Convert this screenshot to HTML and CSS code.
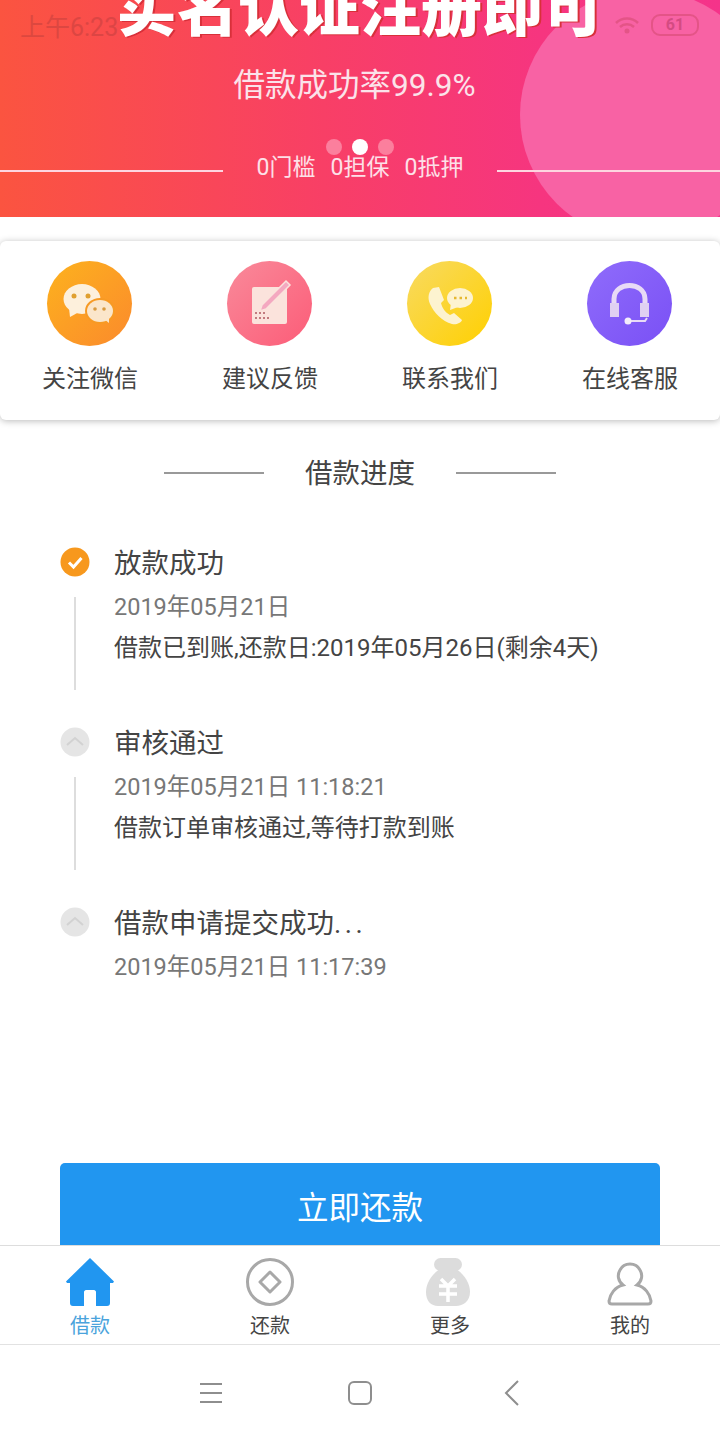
FILE: index.html
```html
<!DOCTYPE html>
<html lang="zh-CN">
<head>
    <meta charset="UTF-8">
    <title>借款进度</title>
    <link rel="stylesheet" href="styles.css">
</head>
<body>
<div class="page">
    <!-- status bar lies over the banner -->
    <div class="statusBar">
        <span class="statusTime">上午6:23</span>
        <svg class="statusWifi" width="26" height="20" viewBox="0 0 26 20">
            <path d="M2 8a16 16 0 0 1 22 0M6 12a10.500 10.500 0 0 1 14 0" fill="none" stroke="#c8405c" stroke-width="2.500"/>
            <circle cx="13" cy="16" r="2.500" fill="#c8405c"/>
        </svg>
        <span class="statusBattery">61</span>
    </div>

    <div class="banner">
        <div class="bannerCircle"></div>
        <div class="bannerTitle">实名认证注册即可</div>
        <div class="bannerRate">借款成功率99.9%</div>
        <div class="bannerDots"><i></i><i class="on"></i><i></i></div>
        <div class="bannerTags">
            <span class="tagLine"></span>
            <span class="tagText">0门槛</span>
            <span class="tagText">0担保</span>
            <span class="tagText">0抵押</span>
            <span class="tagLine"></span>
        </div>
    </div>

    <div class="main">
        <div class="card">
            <div class="cardItem">
                <div class="round roundOrange">
                    <svg width="85" height="85" viewBox="0 0 85 85">
                        <ellipse cx="35" cy="38" rx="18.500" ry="15" fill="#fdf0dc"/>
                        <path d="M22 47l1 9 9-5z" fill="#fdf0dc"/>
                        <ellipse cx="53" cy="50" rx="15" ry="13" fill="#f79a24"/>
                        <ellipse cx="53" cy="50" rx="13" ry="11" fill="#fbe6cb"/>
                        <path d="M57 58l5 4 0-7z" fill="#fbe6cb"/>
                        <circle cx="27" cy="35" r="2.500" fill="#e0a030"/>
                        <circle cx="41" cy="35" r="2.500" fill="#e0a030"/>
                        <circle cx="48" cy="48" r="1.800" fill="#d99a40"/>
                        <circle cx="57" cy="48" r="1.800" fill="#d99a40"/>
                    </svg>
                </div>
                <span class="cardLabel">关注微信</span>
            </div>
            <div class="cardItem">
                <div class="round roundRed">
                    <svg width="85" height="85" viewBox="0 0 85 85">
                        <rect x="25" y="26" width="35" height="37" rx="2" fill="#fbe3dc"/>
                        <path d="M35 44l24-24 4 4-24 24-6 2z" fill="#f4a8c0" stroke="#fbe3dc" stroke-width="1.500"/>
                        <path d="M28 52h12M28 57h14" stroke="#b05a60" stroke-width="1.500" stroke-dasharray="2 2"/>
                    </svg>
                </div>
                <span class="cardLabel">建议反馈</span>
            </div>
            <div class="cardItem">
                <div class="round roundYellow">
                    <svg width="85" height="85" viewBox="0 0 85 85">
                        <path d="M26 27c-4 3-6 9-3 16 4 9 12 17 22 20 4 1 9-1 10-4l-8-7-4 2c-4-2-8-7-9-12l3-3-5-13z" fill="#fdf3d0"/>
                        <ellipse cx="53" cy="37" rx="13" ry="10" fill="#fdf3d0"/>
                        <path d="M44 42l-1 7 8-3z" fill="#fdf3d0"/>
                        <path d="M47 37h13" stroke="#e6b830" stroke-width="2.500" stroke-dasharray="2.500 3"/>
                    </svg>
                </div>
                <span class="cardLabel">联系我们</span>
            </div>
            <div class="cardItem">
                <div class="round roundPurple">
                    <svg width="85" height="85" viewBox="0 0 85 85">
                        <path d="M27 44v-6c0-18 31-18 31 0v6" fill="none" stroke="#e8daf6" stroke-width="5"/>
                        <rect x="23" y="42" width="9" height="14" fill="#e0d0f2"/>
                        <rect x="53" y="42" width="9" height="14" fill="#e0d0f2"/>
                        <path d="M42 60h16l2-3" fill="none" stroke="#e8daf6" stroke-width="2"/>
                        <circle cx="41" cy="60" r="3.500" fill="#f3ecfb"/>
                    </svg>
                </div>
                <span class="cardLabel">在线客服</span>
            </div>
        </div>

        <div class="sectionTitle">
            <span class="sectionLine"></span>
            <span>借款进度</span>
            <span class="sectionLine"></span>
        </div>

        <div class="steps">
            <div class="step">
                <div class="stepSide">
                    <svg class="stepIcon" width="30" height="30" viewBox="0 0 30 30">
                        <circle cx="15" cy="15" r="14.500" fill="#f7981d"/>
                        <path d="M9 15.500l4.500 4.500 8-9" fill="none" stroke="#fff" stroke-width="3"/>
                    </svg>
                    <span class="stepLine"></span>
                </div>
                <div class="stepBody">
                    <div class="stepTitle">放款成功</div>
                    <div class="stepDate">2019年05月21日</div>
                    <div class="stepNote">借款已到账,还款日:2019年05月26日(剩余4天)</div>
                </div>
            </div>
            <div class="step">
                <div class="stepSide">
                    <svg class="stepIcon" width="30" height="30" viewBox="0 0 30 30">
                        <circle cx="15" cy="15" r="14.500" fill="#e5e5e5"/>
                        <path d="M7 18l8-7 8 7" fill="none" stroke="#d2d2d2" stroke-width="2"/>
                    </svg>
                    <span class="stepLine"></span>
                </div>
                <div class="stepBody">
                    <div class="stepTitle">审核通过</div>
                    <div class="stepDate">2019年05月21日 11:18:21</div>
                    <div class="stepNote">借款订单审核通过,等待打款到账</div>
                </div>
            </div>
            <div class="step">
                <div class="stepSide">
                    <svg class="stepIcon" width="30" height="30" viewBox="0 0 30 30">
                        <circle cx="15" cy="15" r="14.500" fill="#e5e5e5"/>
                        <path d="M7 18l8-7 8 7" fill="none" stroke="#d2d2d2" stroke-width="2"/>
                    </svg>
                </div>
                <div class="stepBody">
                    <div class="stepTitle">借款申请提交成功<span class="stepDots">...</span></div>
                    <div class="stepDate">2019年05月21日 11:17:39</div>
                </div>
            </div>
        </div>

        <button class="repayButton">立即还款</button>
    </div>

    <div class="tabBar">
        <div class="tabItem tabActive">
            <svg width="50" height="50" viewBox="0 0 50 50">
                <path d="M25 1L1 24.500l1 1.500h3v20c0 2 1 3 3 3h11V35c0-1 1-2 2-2h8c1 0 2 1 2 2v14h11c2 0 3-1 3-3V26h3l1-1.500z" fill="#2196f0"/>
            </svg>
            <span>借款</span>
        </div>
        <div class="tabItem">
            <svg width="50" height="50" viewBox="0 0 50 50">
                <circle cx="25" cy="25" r="22.500" fill="none" stroke="#a8a8a8" stroke-width="3"/>
                <path d="M25 15l10 10-10 10-10-10z" fill="none" stroke="#a8a8a8" stroke-width="3" stroke-linejoin="round"/>
            </svg>
            <span>还款</span>
        </div>
        <div class="tabItem">
            <svg width="50" height="50" viewBox="0 0 50 50">
                <rect x="9" y="1" width="28" height="13" rx="6.500" fill="#dcdcdc"/>
                <path d="M15 12h16c8 5 14 14 14 23 0 9-7 14-14 14H13C6 49 1 44 1 35c0-9 6-18 14-23z" fill="#dcdcdc"/>
                <path d="M16 22l7 7 7-7M14 29h18M14 37h18M23 29v16" fill="none" stroke="#fff" stroke-width="3.500"/>
            </svg>
            <span>更多</span>
        </div>
        <div class="tabItem">
            <svg width="50" height="50" viewBox="0 0 50 50">
                <path d="M18 28c-5-4-6-10-3-15 2-4 6-6 10-6s8 2 10 6c3 5 2 11-3 15 8 2 13 9 14 16 0 2-1 3-3 3H7c-2 0-3-1-3-3 1-7 6-14 14-16z" fill="none" stroke="#a8a8a8" stroke-width="3"/>
            </svg>
            <span>我的</span>
        </div>
    </div>

    <div class="navBar">
        <svg class="navMenu" width="22" height="22" viewBox="0 0 22 22">
            <path d="M0 2h22M0 11h22M0 20h22" stroke="#8e8e8e" stroke-width="2"/>
        </svg>
        <svg width="24" height="24" viewBox="0 0 24 24">
            <rect x="1" y="1" width="22" height="22" rx="5" fill="none" stroke="#8e8e8e" stroke-width="2"/>
        </svg>
        <svg class="navBack" width="16" height="26" viewBox="0 0 16 26">
            <path d="M14 1L2 13l12 12" fill="none" stroke="#8e8e8e" stroke-width="2"/>
        </svg>
    </div>
</div>
</body>
</html>
```

FILE: styles.css
```css
body {
    margin: 0;
    font-family: Roboto, "Noto Sans CJK SC", sans-serif;
    color: #333;
    background-color: #fff;
}

.page {
    position: relative;
    width: 720px;
    height: 1440px;
    display: flex;
    flex-direction: column;
    overflow: hidden;
}

/* status bar */
.statusBar {
    position: absolute;
    top: 10px;
    left: 20px;
    right: 21px;
    height: 30px;
    display: flex;
    align-items: center;
    opacity: 0.4;
    z-index: 2;
}

.statusTime {
    font-size: 25px;
    color: #b03a3a;
    margin-right: auto;
}

.statusWifi {
    margin-right: 11px;
}

.statusBattery {
    width: 44px;
    height: 18px;
    border: 2px solid #c8405c;
    border-radius: 9px;
    font-size: 16px;
    font-weight: 700;
    line-height: 18px;
    text-align: center;
    color: #a02a50;
}

/* banner */
.banner {
    position: relative;
    flex: none;
    height: 217px;
    overflow: hidden;
    background: linear-gradient(90deg, #fb5440 0%, #f83f66 45%, #f6357f 75%, #f5338a 100%);
    color: #fff;
    text-align: center;
}

.bannerCircle {
    position: absolute;
    left: 520px;
    top: -10px;
    width: 250px;
    height: 250px;
    border-radius: 50%;
    background-color: #f862a4;
}

.bannerTitle {
    position: relative;
    margin-top: -21px;
    height: 63px;
    font-size: 61px;
    line-height: 63px;
    font-weight: 900;
    white-space: nowrap;
    text-shadow: 2px 1px 0 #d8303a;
}

.bannerRate {
    position: relative;
    margin-top: 22px;
    padding-right: 11px;
    font-size: 31.5px;
    line-height: 44px;
    color: #fbe3ea;
}

.bannerDots {
    position: relative;
    display: flex;
    justify-content: center;
    align-items: center;
    gap: 10px;
    margin-top: 30px;
    height: 18px;
}

.bannerDots i {
    width: 16px;
    height: 16px;
    border-radius: 50%;
    background-color: #fb7f9d;
}

.bannerDots i.on {
    background-color: #fff;
}

.bannerTags {
    position: relative;
    display: flex;
    align-items: center;
    gap: 15px;
    margin-top: -9px;
    height: 36px;
    font-size: 23px;
    color: #fde0e8;
}

.tagLine {
    flex: 1;
    height: 2px;
    margin-top: 12px;
    background-color: #fdd5e0;
}

.tagLine:first-child {
    margin-right: 19px;
}

.tagLine:last-child {
    margin-left: 19px;
}

/* card with four shortcuts */
.main {
    flex: 1;
    min-height: 0;
    overflow: hidden;
    display: flex;
    flex-direction: column;
}

.card {
    flex: none;
    display: flex;
    height: 179px;
    margin-top: 24px;
    background-color: #fff;
    border-radius: 6px;
    box-shadow: 0 1px 7px rgba(0, 0, 0, 0.28);
}

.cardItem {
    flex: 1;
    display: flex;
    flex-direction: column;
    align-items: center;
    padding-top: 20px;
}

.round {
    width: 85px;
    height: 85px;
    margin-right: 1px;
    border-radius: 50%;
}

.round svg {
    display: block;
}

.roundOrange {
    background: linear-gradient(135deg, #fdb21e, #fb8a2c);
}

.roundRed {
    background: linear-gradient(135deg, #f98a9a, #fc5c78);
}

.roundYellow {
    background: linear-gradient(135deg, #f8da62, #ffd000);
}

.roundPurple {
    background: linear-gradient(135deg, #8f6cfb, #7a50f5);
}

.cardLabel {
    margin-top: 16px;
    font-size: 24px;
    line-height: 34px;
    color: #444;
}

/* progress */
.sectionTitle {
    flex: none;
    display: flex;
    justify-content: center;
    align-items: center;
    gap: 41px;
    margin-top: 32px;
    height: 38px;
    font-size: 27.5px;
    color: #444;
}

.sectionLine {
    width: 100px;
    height: 2px;
    margin-top: 3px;
    background-color: #999;
}

.steps {
    flex: none;
    height: 616px;
    margin-top: 57px;
    padding-left: 60px;
}

.step {
    display: flex;
    height: 180px;
}

.stepSide {
    width: 54px;
    flex: none;
}

.stepIcon {
    display: block;
}

.stepLine {
    display: block;
    width: 2px;
    height: 93px;
    margin: 20px 0 0 14px;
    background-color: #ddd;
}

.stepBody {
    margin-top: -3px;
}

.stepTitle {
    font-size: 27.5px;
    line-height: 40px;
    color: #444;
}

.stepDots {
    letter-spacing: 3.5px;
}

.stepDate {
    margin-top: 3px;
    font-size: 23.5px;
    line-height: 40px;
    color: #777;
}

.stepNote {
    margin-top: 1px;
    font-size: 24px;
    line-height: 41px;
    color: #444;
}

.repayButton {
    flex: none;
    display: block;
    width: 600px;
    height: 94px;
    margin: 0 auto;
    padding: 0 0 10px;
    border: none;
    border-radius: 5px;
    background-color: #2196f0;
    color: #fff;
    font-family: inherit;
    font-size: 31.5px;
}

/* bottom tabs */
.tabBar {
    flex: none;
    display: flex;
    height: 98px;
    border-top: 1px solid #ddd;
    border-bottom: 1px solid #e2e2e2;
    background-color: #fff;
    position: relative;
}

.tabItem {
    flex: 1;
    display: flex;
    flex-direction: column;
    align-items: center;
    padding-top: 11px;
    font-size: 20px;
    line-height: 30px;
    color: #444;
}

.tabItem svg {
    display: block;
    margin-bottom: 4px;
}

.tabActive {
    color: #4aa3dc;
}

/* android nav */
.navBar {
    flex: none;
    height: 95px;
    display: grid;
    grid-template-columns: repeat(3, 150px);
    justify-content: center;
    justify-items: center;
    align-items: center;
}

.navMenu {
    margin-left: 2px;
}

.navBack {
    margin-left: 4px;
}
```
